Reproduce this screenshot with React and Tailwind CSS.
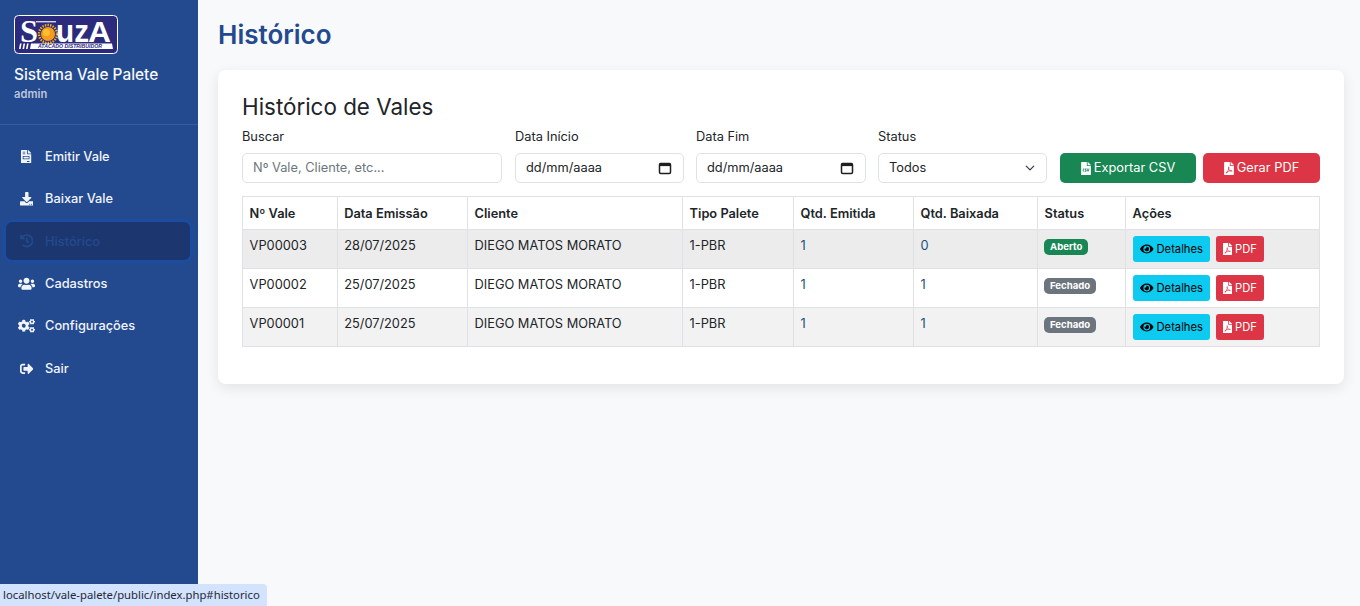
import React from 'react';
import { FaFileInvoice, FaDownload, FaHistory, FaUsers, FaCogs, FaSignOutAlt, FaEye, FaFilePdf, FaFileCsv } from 'react-icons/fa';

const menu = [
  { label: 'Emitir Vale', icon: FaFileInvoice, size: 'w-[10.2px] h-[13.6px]' },
  { label: 'Baixar Vale', icon: FaDownload, size: 'w-[13.6px] h-[13.6px]' },
  { label: 'Histórico', icon: FaHistory, size: 'w-[13.6px] h-[13.6px]', active: true },
  { label: 'Cadastros', icon: FaUsers, size: 'w-[17px] h-[13.6px]' },
  { label: 'Configurações', icon: FaCogs, size: 'w-[17px] h-[13.6px]' },
  { label: 'Sair', icon: FaSignOutAlt, size: 'w-[13.6px] h-[13.6px]' },
];

const rows = [
  { id: 'VP00003', data: '28/07/2025', baixada: '0', status: 'Aberto', bg: 'bg-[#ececec]' },
  { id: 'VP00002', data: '25/07/2025', baixada: '1', status: 'Fechado', bg: 'bg-white' },
  { id: 'VP00001', data: '25/07/2025', baixada: '1', status: 'Fechado', bg: 'bg-[#f2f2f2]' },
];

const headers = ['Nº Vale', 'Data Emissão', 'Cliente', 'Tipo Palete', 'Qtd. Emitida', 'Qtd. Baixada', 'Status', 'Ações'];
const larguras = ['w-[94.6px]', 'w-[130.4px]', 'w-[215px]', 'w-[111px]', 'w-[120px]', 'w-[124px]', 'w-[88px]', 'w-[194px]'];

const Logo = () => (
  <svg width="104" height="39" viewBox="0 0 104 39" className="block overflow-visible">
    <rect x="0.5" y="0.5" width="103" height="38" rx="4" fill="#2c2a7c" stroke="#ffffff" />
    <text x="6" y="27" fill="#fff" fontFamily="Liberation Serif, serif" fontWeight="700" fontSize="32" textLength="18" lengthAdjust="spacingAndGlyphs">S</text>
    <rect x="22" y="6" width="20" height="1.4" fill="#fff" opacity="0.8" />
    <circle cx="34" cy="19" r="9" fill="none" stroke="#f6b51c" strokeWidth="2.4" strokeDasharray="1.4 1.2" />
    <circle cx="34" cy="19" r="7" fill="#f89a1c" />
    <circle cx="32.5" cy="17.5" r="3.5" fill="#fbc02d" />
    <text x="42" y="27" fill="#fff" fontFamily="Liberation Sans, sans-serif" fontWeight="700" fontSize="31" textLength="33" lengthAdjust="spacingAndGlyphs">uz</text>
    <text x="74" y="27" fill="#fff" fontFamily="Liberation Sans, sans-serif" fontWeight="700" fontSize="29" textLength="23" lengthAdjust="spacingAndGlyphs">A</text>
    <path d="M6 28.5h1.6l-1 5.5H5zM9.5 28.5h1.6l-1 5.5H8.5zM13 28.5h1.6l-1 5.5H12zM17 28.5h81l1 5.5H16z" fill="#fff" />
    <text x="24" y="33.4" fill="#2c2a7c" fontFamily="Liberation Sans, sans-serif" fontWeight="700" fontStyle="italic" fontSize="5" textLength="64" lengthAdjust="spacingAndGlyphs">ATACADO DISTRIBUIDOR</text>
  </svg>
);

const Calendario = () => (
  <svg width="14" height="14" viewBox="0 0 14 14" fill="none">
    <rect x="1.5" y="2.5" width="11" height="10" rx="1.2" stroke="#1f1f1f" strokeWidth="1.5" />
    <rect x="1.5" y="2.5" width="11" height="2.6" fill="#1f1f1f" />
  </svg>
);

const Campo = ({ label, className, children }) => (
  <div className={className}>
    <div className="text-[12.8px] leading-[20px] text-[#212529] mb-[6px]">{label}</div>
    <div className="h-[30px] flex items-center justify-between pl-[10px] pr-[11px] bg-white border border-[#dee2e6] rounded-[5px] text-[12.8px] text-[#212529]">
      {children}
    </div>
  </div>
);

export default function App() {
  return (
    <div className="flex h-screen overflow-hidden bg-[#f8f9fa] font-['Inter',sans-serif] text-[#212529] relative">
      {/* sidebar */}
      <aside className="w-[198px] shrink-0 bg-[#234a8e] text-white">
        <div className="pt-[15px] pl-[14px] pb-[22px] border-b border-white/10 h-[125px]">
          <Logo />
          <div className="mt-[11px] text-[15.4px] leading-[20px] font-medium text-[#f4f7fb]">Sistema Vale Palete</div>
          <div className="mt-[2px] text-[11.2px] leading-[14px] font-semibold text-white/70">admin</div>
        </div>
        <nav className="pt-[12.4px] pl-[6px] pr-[8px] flex flex-col">
          {menu.map((item) => {
            const Icon = item.icon;
            return (
              <a
                key={item.label}
                href="#"
                className={`h-[38px] mb-[4.4px] flex items-center pl-[12px] rounded-[6px] text-[12.8px] font-medium ${item.active ? 'bg-[#1c376f] text-[#234a8e] ring-[3px] ring-[#1c4ca0]' : 'text-[#f1f4fa]'}`}
              >
                <span className="w-[27px] flex justify-center pr-[10px]"><Icon className={`${item.size} shrink-0`} /></span>
                {item.label}
              </a>
            );
          })}
        </nav>
      </aside>

      {/* conteudo */}
      <main className="flex-1 pt-[18px] pl-[20px] pr-[16px]">
        <h1 className="text-[26px] leading-[34px] font-semibold text-[#234a8e]">Histórico</h1>
        <section className="mt-[18px] h-[314px] bg-white rounded-[8px] shadow-[0_4px_14px_rgba(0,0,0,0.09)] pt-[22px] px-[24px]">
          <h2 className="text-[22.4px] leading-[30px] font-normal text-[#212529]">Histórico de Vales</h2>

          <div className="flex items-end mt-[5px]">
            <Campo label="Buscar" className="w-[260px] mr-[13px]">
              <span className="text-[#6c757d]">Nº Vale, Cliente, etc...</span>
            </Campo>
            <Campo label="Data Início" className="w-[169px] mr-[12px]">
              <span>dd/mm/aaaa</span><Calendario />
            </Campo>
            <Campo label="Data Fim" className="w-[170px] mr-[12px]">
              <span>dd/mm/aaaa</span><Calendario />
            </Campo>
            <Campo label="Status" className="w-[169px] mr-[13px]">
              <span>Todos</span>
              <svg width="10" height="10" viewBox="0 0 16 16" fill="none"><path d="M2 5l6 6 6-6" stroke="#343a40" strokeWidth="2" strokeLinecap="round" strokeLinejoin="round" /></svg>
            </Campo>
            <button className="w-[136px] h-[30px] mr-[7px] flex items-center justify-center gap-[3px] bg-[#198754] text-white text-[12.8px] rounded-[5px]">
              <FaFileCsv className="w-[10px] h-[13px]" />Exportar CSV
            </button>
            <button className="w-[117px] h-[30px] flex items-center justify-center gap-[3px] bg-[#dc3545] text-white text-[12.8px] rounded-[5px]">
              <FaFilePdf className="w-[10px] h-[13px]" />Gerar PDF
            </button>
          </div>

          <table className="mt-[13px] w-[1078px] table-fixed border-collapse text-[12.8px]">
            <thead>
              <tr className="h-[33px]">
                {headers.map((h, i) => (
                  <th key={h} className={`${larguras[i]} border border-[#dee2e6] px-[6.6px] pt-[1px] text-left font-semibold text-[#212529]`}>{h}</th>
                ))}
              </tr>
            </thead>
            <tbody>
              {rows.map((r) => (
                <tr key={r.id} className={`h-[39px] ${r.bg}`}>
                  <td className="border border-[#dee2e6] px-[6.6px] pb-[7px] pt-0">{r.id}</td>
                  <td className="border border-[#dee2e6] px-[6.6px] pb-[7px] pt-0">{r.data}</td>
                  <td className="border border-[#dee2e6] px-[6.6px] pb-[7px] pt-0">DIEGO MATOS MORATO</td>
                  <td className="border border-[#dee2e6] px-[6.6px] pb-[7px] pt-0">1-PBR</td>
                  <td className="border border-[#dee2e6] px-[6.6px] pb-[7px] pt-0 text-[#1a4f7a]">1</td>
                  <td className="border border-[#dee2e6] px-[6.6px] pb-[7px] pt-0 text-[#1a4f7a]">{r.baixada}</td>
                  <td className="border border-[#dee2e6] px-[6px] pb-[7px] pt-0">
                    <span className={`inline-block h-[16px] px-[6px] rounded-[5px] text-white text-[9.6px] leading-[15px] font-bold ${r.status === 'Aberto' ? 'bg-[#198754]' : 'bg-[#6c757d]'}`}>{r.status}</span>
                  </td>
                  <td className="border border-[#dee2e6] px-[7px] py-0">
                    <div className="flex gap-[6px]">
                      <button className="w-[77px] h-[26px] flex items-center justify-center gap-[3px] bg-[#0dcaf0] text-black text-[11.2px] rounded-[3px]">
                        <FaEye className="w-[13.5px] h-[12px]" />Detalhes
                      </button>
                      <button className="w-[48px] h-[26px] flex items-center justify-center gap-[3px] bg-[#dc3545] text-white text-[11.2px] rounded-[3px]">
                        <FaFilePdf className="w-[9px] h-[12px]" />PDF
                      </button>
                    </div>
                  </td>
                </tr>
              ))}
            </tbody>
          </table>
        </section>
      </main>

      {/* link de status do navegador */}
      <div className="absolute left-0 bottom-0 h-[22px] w-[267px] pl-[3px] flex items-center bg-[#d3e3fd] rounded-tr-[4px] text-[11.3px] text-[#1f2937] font-['Noto_Sans',sans-serif] whitespace-nowrap">
        localhost/vale-palete/public/index.php#historico
      </div>
    </div>
  );
}
